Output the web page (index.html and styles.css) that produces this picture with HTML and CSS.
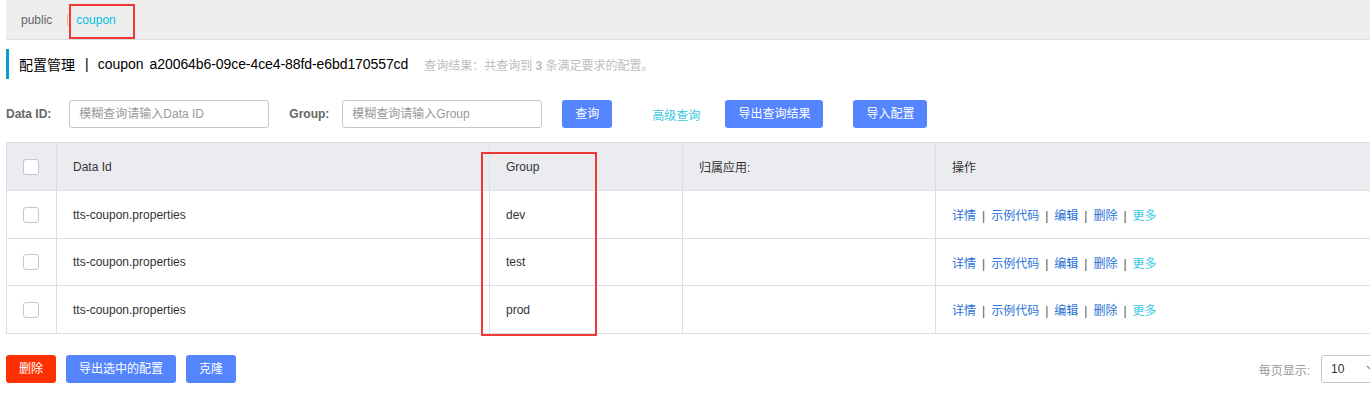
FILE: index.html
```html
<!DOCTYPE html>
<html lang="zh-CN">
<head>
<meta charset="utf-8">
<title>配置管理</title>
<link rel="stylesheet" href="styles.css">
</head>
<body>
<div class="page">
  <div class="ns-bar">
    <span class="ns-tab">public</span>
    <span class="ns-sep"></span>
    <span class="ns-tab ns-active">coupon</span>
  </div>

  <div class="title-row">
    <div class="title"><span>配置管理</span><span class="t-pipe">|</span><span>coupon</span><span class="t-id">a20064b6-09ce-4ce4-88fd-e6bd170557cd</span></div>
    <div class="result">查询结果：共查询到 <b>3</b> 条满足要求的配置。</div>
  </div>

  <div class="search">
    <label class="s-label">Data ID:</label>
    <div class="s-input">模糊查询请输入Data ID</div>
    <label class="s-label s-label-group">Group:</label>
    <div class="s-input">模糊查询请输入Group</div>
    <button class="btn btn-primary btn-query">查询</button>
    <a class="adv-link">高级查询</a>
    <button class="btn btn-primary btn-export">导出查询结果</button>
    <button class="btn btn-primary btn-import">导入配置</button>
  </div>

  <table class="grid">
    <colgroup>
      <col class="c-check"><col class="c-id"><col class="c-group"><col class="c-app"><col class="c-op">
    </colgroup>
    <thead>
      <tr><th><span class="cb"></span></th><th>Data Id</th><th>Group</th><th>归属应用:</th><th>操作</th></tr>
    </thead>
    <tbody>
      <tr><td><span class="cb"></span></td><td>tts-coupon.properties</td><td>dev</td><td></td>
        <td class="ops"><a>详情</a><i>|</i><a>示例代码</a><i>|</i><a>编辑</a><i>|</i><a>删除</a><i>|</i><a class="more">更多</a></td></tr>
      <tr class="row-short"><td><span class="cb"></span></td><td>tts-coupon.properties</td><td>test</td><td></td>
        <td class="ops"><a>详情</a><i>|</i><a>示例代码</a><i>|</i><a>编辑</a><i>|</i><a>删除</a><i>|</i><a class="more">更多</a></td></tr>
      <tr><td><span class="cb"></span></td><td>tts-coupon.properties</td><td>prod</td><td></td>
        <td class="ops"><a>详情</a><i>|</i><a>示例代码</a><i>|</i><a>编辑</a><i>|</i><a>删除</a><i>|</i><a class="more">更多</a></td></tr>
    </tbody>
  </table>

  <div class="footer">
    <div class="f-left">
      <button class="btn btn-danger">删除</button>
      <button class="btn btn-primary">导出选中的配置</button>
      <button class="btn btn-primary">克隆</button>
    </div>
    <div class="f-right">
      <span class="page-label">每页显示:</span>
      <div class="page-select"><span>10</span><svg class="chev" width="12" height="8" viewBox="0 0 12 8"><path d="M1 1 L6 6 L11 1" fill="none" stroke="#888" stroke-width="1.2"/></svg></div>
    </div>
  </div>

  <div class="mark mark-tab"></div>
  <div class="mark mark-group"></div>
</div>
</body>
</html>
```

FILE: styles.css
```css
html, body {
  margin: 0;
  padding: 0;
  background: #fff;
  overflow: hidden;
}
body {
  font-family: "Liberation Sans", "Noto Sans CJK SC", sans-serif;
  font-size: 12px;
  color: #333;
}
.page {
  position: relative;
  width: 1420px;
  padding-left: 6px;
}

/* namespace bar */
.ns-bar {
  height: 39px;
  background: #eeeeee;
  border-bottom: 1px solid #dddddd;
  display: flex;
  align-items: center;
  padding-left: 15px;
}
.ns-tab {
  color: #666;
  font-size: 12px;
  line-height: 16px;
}
.ns-sep {
  width: 1px;
  height: 12px;
  background: #f0b878;
  margin: 0 8px 0 15px;
}
.ns-active {
  color: #00c1de;
}

/* title */
.title-row {
  margin-top: 9px;
  height: 30px;
  display: flex;
  align-items: center;
  border-left: 3px solid #0a9bd4;
  padding-left: 10px;
}
.title {
  font-size: 14px;
  color: #000;
  display: flex;
  align-items: center;
}
.t-pipe {
  margin: 0 9px 0 10px;
}
.t-id {
  margin-left: 6px;
  letter-spacing: -0.08px;
}
.result {
  margin-left: 16px;
  font-size: 12px;
  color: #bdbdbd;
}
.result b {
  font-weight: bold;
}

/* search */
.search {
  margin-top: 21px;
  height: 28px;
  display: flex;
  align-items: center;
}
.s-label {
  font-weight: bold;
  color: #666;
  font-size: 12px;
  margin-right: 18px;
}
.s-label-group {
  margin-left: 20px;
  margin-right: 13px;
}
.s-input {
  box-sizing: border-box;
  width: 200px;
  height: 28px;
  border: 1px solid #c4c6cf;
  border-radius: 3px;
  padding-left: 9px;
  line-height: 26px;
  color: #999;
  font-size: 12px;
}
.btn {
  box-sizing: border-box;
  height: 28px;
  padding: 0 13px;
  border: none;
  border-radius: 3px;
  font-family: inherit;
  font-size: 12px;
  color: #fff;
  line-height: 28px;
}
.btn-primary {
  background: #5584ff;
}
.btn-danger {
  background: #ff3000;
}
.btn-query {
  margin-left: 20px;
}
.adv-link {
  margin-left: 40px;
  color: #39c9e2;
  font-size: 12px;
}
.btn-export {
  margin-left: 25px;
}
.btn-import {
  margin-left: 30px;
}

/* table */
.grid {
  margin-top: 14px;
  width: 1420px;
  border-collapse: collapse;
  table-layout: fixed;
}
.c-check { width: 50px; }
.c-id { width: 433px; }
.c-group { width: 193px; }
.c-app { width: 253px; }
.grid th, .grid td {
  height: 48px;
  padding: 0 16px;
  text-align: left;
  border: 1px solid #dcdee3;
  font-size: 12px;
  color: #333;
  font-weight: normal;
  box-sizing: border-box;
}
.grid .row-short td {
  height: 47px;
}
.grid th {
  background: #ebecf0;
}
.grid th:first-child, .grid td:first-child {
  padding: 0 0 0 16px;
}
.cb {
  display: block;
  box-sizing: border-box;
  width: 16px;
  height: 16px;
  border: 1px solid #c4c6cf;
  border-radius: 3px;
  background: #fff;
}
.ops a {
  color: #2a72d6;
}
.ops a.more {
  color: #39c9e2;
}
.ops i {
  font-style: normal;
  color: #555;
  margin: 0 6px;
}

/* footer */
.footer {
  margin-top: 21px;
  display: flex;
  align-items: center;
  width: 1364px;
  justify-content: space-between;
}
.f-left {
  display: flex;
  gap: 10px;
}
.f-right {
  display: flex;
  align-items: center;
}
.page-label {
  color: #999;
  font-size: 12px;
  margin-right: 11px;
}
.page-select {
  box-sizing: border-box;
  width: 60px;
  height: 28px;
  border: 1px solid #c4c6cf;
  border-radius: 3px;
  display: flex;
  align-items: center;
  padding-left: 9px;
  margin-right: -11px;
  font-size: 12px;
  color: #333;
}
.chev {
  margin-left: 22px;
}

/* annotation boxes */
.mark {
  position: absolute;
  border: 2px solid #f03838;
  box-sizing: border-box;
}
.mark-tab {
  left: 69px;
  top: 4px;
  width: 66px;
  height: 35px;
}
.mark-group {
  left: 481px;
  top: 152px;
  width: 116px;
  height: 184px;
}
```
